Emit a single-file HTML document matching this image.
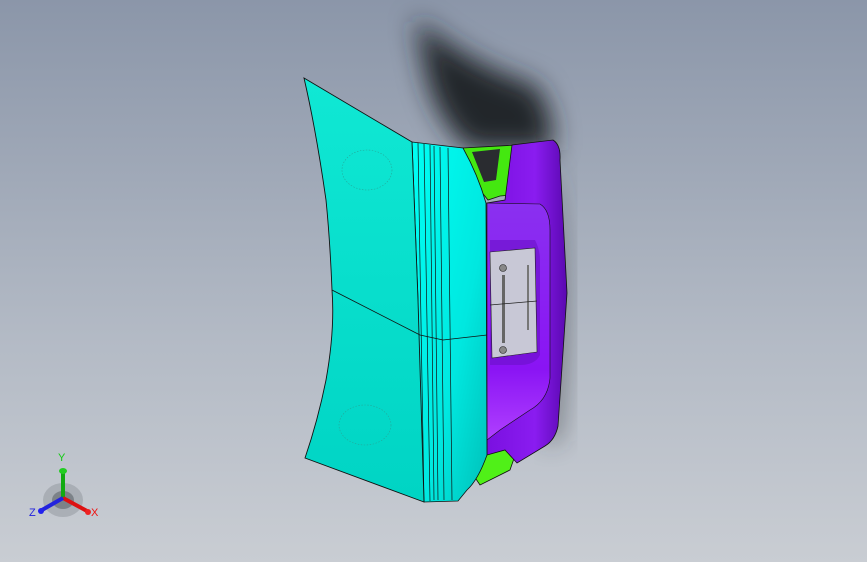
<!DOCTYPE html>
<html><head><style>
html,body{margin:0;padding:0;width:867px;height:562px;overflow:hidden;background:linear-gradient(#8b96a9,#b3bac5 60%,#c9cdd3);}
svg{position:absolute;left:0;top:0}
</style></head><body>
<svg width="867" height="562" viewBox="0 0 867 562" font-family="Liberation Sans, sans-serif">
<defs>
<filter id="bl" x="-50%" y="-50%" width="200%" height="200%"><feGaussianBlur stdDeviation="13"/></filter>
<filter id="bl2" x="-50%" y="-50%" width="200%" height="200%"><feGaussianBlur stdDeviation="12"/></filter>
<linearGradient id="cy" x1="0" y1="0" x2="0" y2="1"><stop offset="0" stop-color="#10e8d4"/><stop offset="1" stop-color="#00d4c4"/></linearGradient>
<linearGradient id="cy2" x1="0" y1="0" x2="1" y2="1"><stop offset="0" stop-color="#00fff4"/><stop offset="0.6" stop-color="#00e8e0"/><stop offset="1" stop-color="#00c0b8"/></linearGradient>
<linearGradient id="pu" x1="0" y1="0" x2="1" y2="0"><stop offset="0" stop-color="#7a10e0"/><stop offset="0.6" stop-color="#8a1cf0"/><stop offset="1" stop-color="#5a08b0"/></linearGradient>
<linearGradient id="pu2" x1="0" y1="0" x2="0" y2="1"><stop offset="0" stop-color="#8a30f0"/><stop offset="0.7" stop-color="#8a14f4"/><stop offset="1" stop-color="#b040ff"/></linearGradient>
</defs>
<path d="M415 18 Q470 65 535 85 Q555 110 552 150 L470 150 Q435 120 425 70 Z" fill="#23262b" filter="url(#bl)"/>
<path d="M555 150 Q575 300 560 440 L545 445 Z" fill="#2a2d33" opacity="0.5" filter="url(#bl2)"/>
<path d="M463 148 L517 145 L512 195 L500 196 L488 200 L480 190 L470 170 Z" fill="#44e810" stroke="#111" stroke-width="0.8"/>
<path d="M472 152 L500 149 L496 180 L484 182 Z" fill="#2a2c30"/>
<path d="M470 470 L495 440 L518 447 L510 470 L480 485 Z" fill="#50f018" stroke="#111" stroke-width="0.8"/>
<path d="M512 145 L553 140 Q561 145 560 160 L567 293 L558 426 Q555 440 545 446 L517 463 L505 450 L487 455 L487 203 L505 200 Z" fill="url(#pu)" stroke="#111" stroke-width="0.8"/>
<path d="M487 203 L540 204 Q550 210 550 230 L550 378 Q548 400 530 410 L500 430 L487 440 Z" fill="url(#pu2)" stroke="#111" stroke-width="0.6"/>
<path d="M490 240 L535 240 Q540 250 540 260 L540 355 Q535 365 520 365 L490 365 Z" fill="#6a10c8" opacity="0.6"/>
<path d="M490 252 L535 248 L537 352 L492 358 Z" fill="#c8c8d6" stroke="#222" stroke-width="0.6"/>
<rect x="502" y="275" width="3" height="68" fill="#666"/>
<rect x="527" y="265" width="2" height="65" fill="#777"/>
<circle cx="503" cy="268" r="3.5" fill="#888" stroke="#222" stroke-width="0.6"/>
<circle cx="503" cy="350" r="3.5" fill="#888" stroke="#222" stroke-width="0.6"/>
<line x1="490" y1="305" x2="537" y2="301" stroke="#222" stroke-width="0.7"/>
<path d="M412 142 L463 148 Q478 175 486 203 L487 455 Q478 480 467 490 L458 501 L424 502 L420 440 L418 300 Z" fill="url(#cy2)" stroke="#111" stroke-width="0.8"/>
<path d="M418 143 L424 502 M424 144 L430 501 M430 145 L434 500 M434 146 L438 500 M440 147 L444 500 M448 148 L452 500" stroke="#111" stroke-width="0.7" fill="none"/>
<path d="M304 78 L412 142 L418 300 L424 502 L305 458 Q318 420 326 380 Q335 330 332 290 Q330 240 326 200 Q316 130 304 78 Z" fill="url(#cy)" stroke="#111" stroke-width="0.9"/>
<path d="M332 290 L420 335 L443 340 L487 335" stroke="#111" stroke-width="0.8" fill="none"/>
<ellipse cx="367" cy="170" rx="25" ry="20" fill="none" stroke="#22a99a" stroke-width="0.6" stroke-dasharray="1.5,1.5"/>
<ellipse cx="365" cy="425" rx="26" ry="20" fill="none" stroke="#22a99a" stroke-width="0.6" stroke-dasharray="1.5,1.5"/>
<ellipse cx="63" cy="500" rx="20" ry="17" fill="#8f959c" opacity="0.5"/>
<ellipse cx="63" cy="500" rx="11" ry="9" fill="#50565c" opacity="0.5"/>
<line x1="63" y1="498" x2="63" y2="472" stroke="#1a1" stroke-width="4"/>
<ellipse cx="63" cy="471" rx="4" ry="3" fill="#2c2"/>
<line x1="63" y1="498" x2="87" y2="511" stroke="#d11" stroke-width="4"/>
<circle cx="88" cy="512" r="3" fill="#e22"/>
<line x1="63" y1="498" x2="42" y2="510" stroke="#22d" stroke-width="4"/>
<circle cx="41" cy="511" r="3" fill="#22e"/>
<text x="58" y="461" font-size="11" fill="#1c1">Y</text>
<text x="91" y="516" font-size="11" fill="#e11">X</text>
<text x="29" y="516" font-size="11" fill="#22d">Z</text>
</svg>
</body></html>
